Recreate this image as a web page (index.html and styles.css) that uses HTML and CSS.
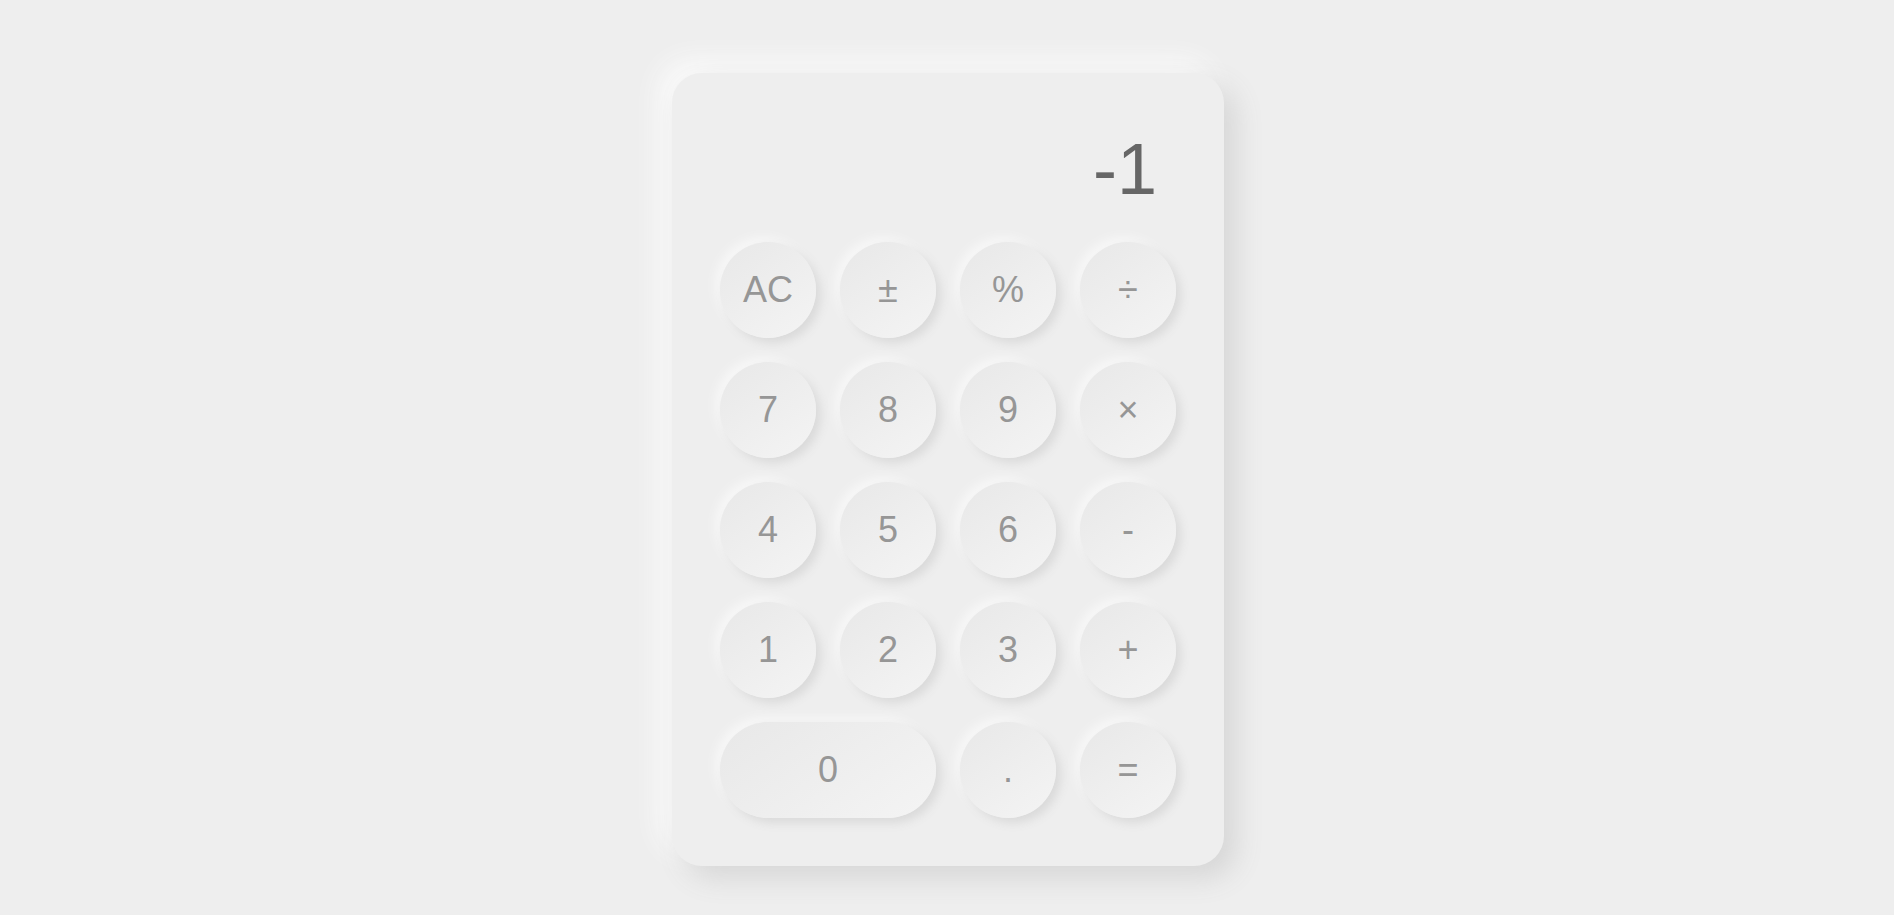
FILE: index.html
```html
<!DOCTYPE html>
<html lang="en">
<head>
<meta charset="utf-8">
<title>Calculator</title>
<link rel="stylesheet" href="styles.css">
</head>
<body>
<main class="calculator">
  <div class="display">-1</div>
  <div class="keys">
    <button class="key">AC</button>
    <button class="key">±</button>
    <button class="key">%</button>
    <button class="key">÷</button>
    <button class="key">7</button>
    <button class="key">8</button>
    <button class="key">9</button>
    <button class="key">×</button>
    <button class="key">4</button>
    <button class="key">5</button>
    <button class="key">6</button>
    <button class="key">-</button>
    <button class="key">1</button>
    <button class="key">2</button>
    <button class="key">3</button>
    <button class="key">+</button>
    <button class="key key-wide">0</button>
    <button class="key">.</button>
    <button class="key">=</button>
  </div>
</main>
</body>
</html>
```

FILE: styles.css
```css
html, body {
  margin: 0;
  padding: 0;
  background: #eeeeee;
  font-family: "Liberation Sans", Arial, sans-serif;
}

body {
  display: flex;
  justify-content: center;
  align-items: flex-start;
  padding: 73px 0 0 2px;
  min-height: 100vh;
  box-sizing: border-box;
}

.calculator {
  width: 552px;
  box-sizing: border-box;
  padding: 48px;
  background: #eeeeee;
  border-radius: 30px;
  box-shadow: 12px 12px 28px #d6d6d6, -12px -12px 28px #fbfbfb;
}

.display {
  height: 97px;
  box-sizing: border-box;
  margin-bottom: 24px;
  padding: 12px 19px 0 0;
  text-align: right;
  font-size: 72px;
  line-height: 72px;
  color: #666666;
}

.keys {
  display: grid;
  grid-template-columns: repeat(4, 96px);
  grid-auto-rows: 96px;
  gap: 24px;
}

.key {
  border: none;
  padding: 0;
  margin: 0;
  width: 96px;
  height: 96px;
  border-radius: 50%;
  font-family: "Liberation Sans", Arial, sans-serif;
  font-size: 36px;
  color: #969696;
  background: linear-gradient(145deg, #e8e8e8, #f4f4f4);
  box-shadow: 5px 5px 10px #dadada, -5px -5px 10px #f7f7f7;
  display: flex;
  align-items: center;
  justify-content: center;
  cursor: pointer;
}

.key-wide {
  grid-column: span 2;
  width: 216px;
  border-radius: 48px;
}
```
